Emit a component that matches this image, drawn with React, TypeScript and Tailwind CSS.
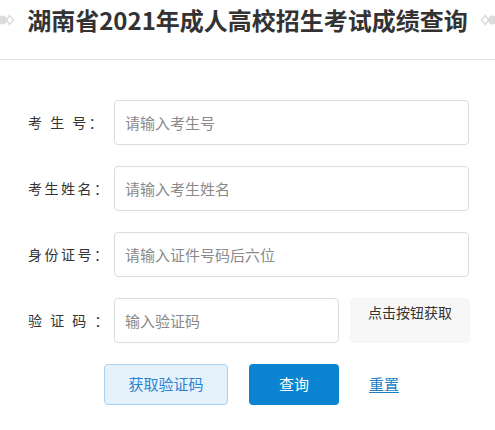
import React from "react"

const font = { fontFamily: '"Noto Sans CJK SC", "Noto Sans", sans-serif' }

function Ornament({ flip }: { flip?: boolean }) {
  return (
    <svg width="14" height="12" viewBox="0 0 14 12" className={flip ? "-scale-x-100" : ""}>
      <circle cx="2.5" cy="6" r="4.5" fill="#dcdcdc" />
      <path d="M9.5 1.5 L13.5 6 L9.5 10.5 L6.5 6 Z" fill="none" stroke="#dcdcdc" strokeWidth="1.6" />
    </svg>
  )
}

function Row({ label, placeholder, children }: { label: string; placeholder: string; children?: React.ReactNode }) {
  return (
    <div className="flex items-center h-[45px]">
      <label className="w-[114px] shrink-0 pl-[28px] text-[14px] tracking-[2.5px] text-[#333] whitespace-pre">{label}</label>
      <input
        placeholder={placeholder}
        className={`h-[45px] shrink-0 ${children ? "w-[225px]" : "w-[355px]"} rounded border border-[#dcdcdc] px-[10px] text-[15px] text-[#333] placeholder:text-[#8a8a8a] outline-none`}
      />
      {children}
    </div>
  )
}

export default function App() {
  return (
    <div className="w-[495px] h-[430px] bg-white" style={font}>
      <header className="h-[60px] border-b border-[#e2e2e2] flex items-center justify-between pb-[19px]">
        <Ornament />
        <h1 className="text-[24px] font-bold text-[#333] leading-none">湖南省2021年成人高校招生考试成绩查询</h1>
        <Ornament flip />
      </header>

      <form className="mt-[40px] flex flex-col gap-[21px]">
        <Row label={"考 生 号："} placeholder="请输入考生号" />
        <Row label="考生姓名：" placeholder="请输入考生姓名" />
        <Row label="身份证号：" placeholder="请输入证件号码后六位" />
        <Row label={"验 证 码 ："} placeholder="输入验证码">
          <button
            type="button"
            className="ml-[11px] w-[120px] h-[45px] shrink-0 rounded bg-[#f7f7f7] text-[14px] text-[#333] pt-[4px] flex justify-center items-start"
          >
            点击按钮获取
          </button>
        </Row>

        <div className="flex items-center pl-[104px]">
          <button
            type="button"
            className="w-[124px] h-[41px] rounded border border-[#a9d3f3] bg-[#e6f2fb] text-[15px] text-[#2a84d2]"
          >
            获取验证码
          </button>
          <button type="button" className="ml-[21px] w-[90px] h-[41px] rounded bg-[#0a84d0] text-[15px] text-white">
            查询
          </button>
          <a href="#" className="ml-[30px] text-[15px] text-[#1d7fc5] underline underline-offset-2">
            重置
          </a>
        </div>
      </form>
    </div>
  )
}
